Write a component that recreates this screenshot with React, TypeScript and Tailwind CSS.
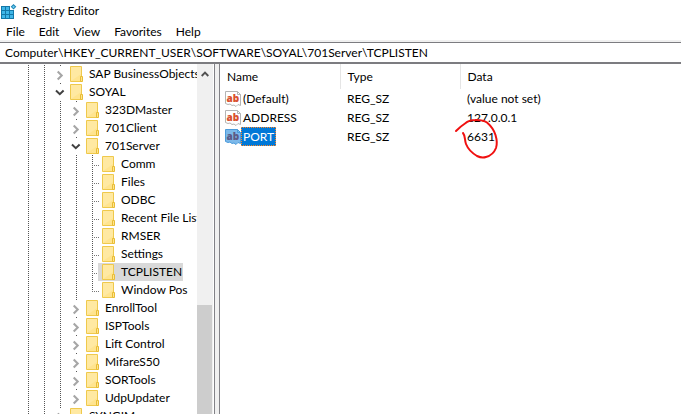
type CellKind = "line" | "closed" | "open" | "branch" | "last";

type Node = {
  name: string;
  cells: CellKind[];
  selected?: boolean;
};

const tree: Node[] = [
  { name: "SAP BusinessObjects", cells: ["line", "line", "closed"] },
  { name: "SOYAL", cells: ["line", "line", "open"] },
  { name: "323DMaster", cells: ["line", "line", "line", "closed"] },
  { name: "701Client", cells: ["line", "line", "line", "closed"] },
  { name: "701Server", cells: ["line", "line", "line", "open"] },
  { name: "Comm", cells: ["line", "line", "line", "line", "branch"] },
  { name: "Files", cells: ["line", "line", "line", "line", "branch"] },
  { name: "ODBC", cells: ["line", "line", "line", "line", "branch"] },
  { name: "Recent File List", cells: ["line", "line", "line", "line", "branch"] },
  { name: "RMSER", cells: ["line", "line", "line", "line", "branch"] },
  { name: "Settings", cells: ["line", "line", "line", "line", "branch"] },
  { name: "TCPLISTEN", cells: ["line", "line", "line", "line", "branch"], selected: true },
  { name: "Window Pos", cells: ["line", "line", "line", "line", "last"] },
  { name: "EnrollTool", cells: ["line", "line", "line", "closed"] },
  { name: "ISPTools", cells: ["line", "line", "line", "closed"] },
  { name: "Lift Control", cells: ["line", "line", "line", "closed"] },
  { name: "MifareS50", cells: ["line", "line", "line", "closed"] },
  { name: "SORTools", cells: ["line", "line", "line", "closed"] },
  { name: "UdpUpdater", cells: ["line", "line", "line", "closed"] },
  { name: "SYNGIM", cells: ["line", "line", "closed"] },
];

const values = [
  { name: "(Default)", type: "REG_SZ", data: "(value not set)" },
  { name: "ADDRESS", type: "REG_SZ", data: "127.0.0.1" },
  { name: "PORT", type: "REG_SZ", data: "6631", selected: true, circled: true },
];

const menus = ["File", "Edit", "View", "Favorites", "Help"];

function TreeCell({ kind }: { kind: CellKind }) {
  const bottom = kind === "last" ? 11 : kind === "closed" || kind === "open" ? 1 : 18;
  return (
    <svg width="16" height="18" viewBox="0 0 16 18" fill="none" className="shrink-0" aria-hidden="true">
      <path d={`M8.5 0V${bottom}`} stroke="#555" strokeDasharray="1 1" />
      {(kind === "branch" || kind === "last") && <path d="M8 10.5H15" stroke="#777" strokeDasharray="1 1" />}
      {kind === "closed" && <path d="M5.7 6.4L9.7 10.4L5.7 14.4" stroke="#a6a6a6" strokeWidth="2.1" />}
      {kind === "open" && <path d="M4 7.6L7.8 11.2L11.6 7.6" stroke="#404040" strokeWidth="2" />}
    </svg>
  );
}

function FolderIcon() {
  return (
    <svg width="13" height="16" viewBox="0 0 13 16" className="shrink-0" aria-hidden="true">
      <path d="M.5 .5H11.5V15.5H.5Z" fill="#ffe48f" stroke="#efc94c" />
      <path d="M1 1H11V8L1 15Z" fill="#ffe9a2" />
      <path d="M10.5 10.5H12.5V15.5H10.5Z" fill="#ffe48f" stroke="#e8bd35" />
    </svg>
  );
}

function StringIcon({ selected }: { selected?: boolean }) {
  return (
    <svg width="16" height="16" viewBox="0 0 16 16" className="shrink-0" aria-hidden="true">
      <path
        d="M.5 .5H12.5L15.5 3.5V14.5L13 13.5L11 15.5L9 14L7 14.5L5 13L3 13.5L.5 12.5Z"
        fill={selected ? "#7cb9ea" : "#fff"}
        stroke={selected ? "#4b9bdb" : "#b4b4b4"}
      />
      <path d="M12.5 .5V3.5H15.5" fill="none" stroke={selected ? "#4b9bdb" : "#b4b4b4"} />
      <text x="1.5" y="11" fontSize="10" fontWeight="800" fontFamily="Open Sans, sans-serif" fill={selected ? "#5d5a86" : "#d9502e"}>
        ab
      </text>
    </svg>
  );
}

function RegistryIcon() {
  return (
    <svg width="16" height="17" viewBox="0 0 16 17" className="shrink-0" aria-hidden="true">
      <path d="M0 3H9V7H13V16H0Z" fill="#1478a8" />
      <path
        d="M1 4H4V7H1ZM5 4H8V7H5ZM1 8H4V11H1ZM5 8H8V11H5ZM9 8H12V11H9ZM1 12H4V15H1ZM5 12H8V15H5ZM9 12H12V15H9Z"
        fill="#3fb6e8"
      />
      <path d="M12.5 1L15.3 3.8L12.5 6.6L9.7 3.8Z" fill="#1a83b4" />
      <path d="M12.5 2.4L13.9 3.8L12.5 5.2L11.1 3.8Z" fill="#6fcdf2" />
    </svg>
  );
}

export default function App() {
  return (
    <div className="flex h-screen flex-col overflow-hidden bg-white font-[Lato,'Open_Sans',sans-serif] text-xs text-black">
      <header className="flex h-[22px] shrink-0 items-center gap-[5px] pl-px">
        <RegistryIcon />
        <h1>Registry Editor</h1>
      </header>
      <nav className="flex h-5 shrink-0 items-center gap-[14px] pl-[6px]">
        {menus.map((m) => (
          <button key={m} type="button">
            {m}
          </button>
        ))}
      </nav>
      <div className="shrink-0">
        <input
          aria-label="Registry path"
          defaultValue={"Computer\\HKEY_CURRENT_USER\\SOFTWARE\\SOYAL\\701Server\\TCPLISTEN"}
          className="block h-[22px] w-full border-t border-b-2 border-[#7c7c80] px-[5px] shadow-[0_-2px_0_#f0f0f0] outline-none"
        />
      </div>
      <main className="flex min-h-0 flex-1">
        <aside className="flex w-[214px] shrink-0 pr-px">
          <ul role="tree" aria-label="Registry keys" className="min-w-0 flex-1 overflow-hidden pt-px pl-5">
            {tree.map((n) => (
              <li key={n.name} role="treeitem" aria-selected={!!n.selected} className="flex h-[18px] items-center">
                {n.cells.map((c, i) => (
                  <TreeCell key={i} kind={c} />
                ))}
                <span
                  className={`-ml-0.5 flex h-[18px] items-center gap-[6px] pl-1 whitespace-nowrap ${n.selected ? "bg-[#d9d9d9] pr-px" : ""}`}
                >
                  <FolderIcon />
                  {n.name}
                </span>
              </li>
            ))}
          </ul>
          <div className="flex w-4 shrink-0 flex-col bg-[#f0f0f0]">
            <button type="button" aria-label="Scroll up" className="flex h-5 items-center justify-center">
              <svg width="8" height="6" viewBox="0 0 8 6" fill="none" aria-hidden="true">
                <path d="M.7 5L4 1.7L7.3 5" stroke="#505050" strokeWidth="1.9" />
              </svg>
            </button>
            <div className="mt-[221px] mr-px flex-1 bg-[#cdcdcd]" />
          </div>
        </aside>
        <div className="w-[6px] shrink-0 border-x border-[#828287] bg-[#f0f0f0]" />
        <section className="min-w-0 flex-1 overflow-hidden">
          <table className="w-full table-fixed border-collapse text-left">
            <colgroup>
              <col className="w-[120px]" />
              <col className="w-[120px]" />
              <col />
            </colgroup>
            <thead>
              <tr className="h-[25px]">
                <th className="border-r border-[#e5e5e5] p-0 pl-[7px] font-normal">Name</th>
                <th className="border-r border-[#e5e5e5] p-0 pl-[7px] font-normal">Type</th>
                <th className="p-0 pl-[7px] font-normal">Data</th>
              </tr>
            </thead>
            <tbody>
              {values.map((v) => (
                <tr key={v.name} className="h-[19px]">
                  <td className="p-0 pl-[5px]">
                    <div className="flex items-center">
                      <StringIcon selected={v.selected} />
                      <span
                        className={`flex h-[19px] items-center px-0.5 ${v.selected ? "bg-[#0078d7] text-white outline-1 -outline-offset-1 outline-dotted outline-[#ff8728]" : ""}`}
                      >
                        {v.name}
                      </span>
                    </div>
                  </td>
                  <td className="p-0 pl-[7px]">{v.type}</td>
                  <td className="p-0 pl-[7px]">
                    <span className="relative">
                      {v.data}
                      {v.circled && (
                        <svg
                          width="46"
                          height="42"
                          viewBox="0 0 46 42"
                          fill="none"
                          className="absolute -top-[11px] -left-[13px] max-w-none"
                          aria-hidden="true"
                        >
                          <path
                            d="M2 13C5 10 7 8 11 5.500C14 3 17 2 21 2C26 1.800 30 2.500 33 4.500C37 8 40 12 41.500 17C43 22 43.300 26 42 30C40 35 36 38 32 39C29 40 26 39.500 23 38C18 35 14 31 12 26C10.500 22 11.500 18 9 15"
                            stroke="#f01010"
                            strokeWidth="2"
                            strokeLinecap="round"
                          />
                        </svg>
                      )}
                    </span>
                  </td>
                </tr>
              ))}
            </tbody>
          </table>
        </section>
      </main>
    </div>
  );
}
